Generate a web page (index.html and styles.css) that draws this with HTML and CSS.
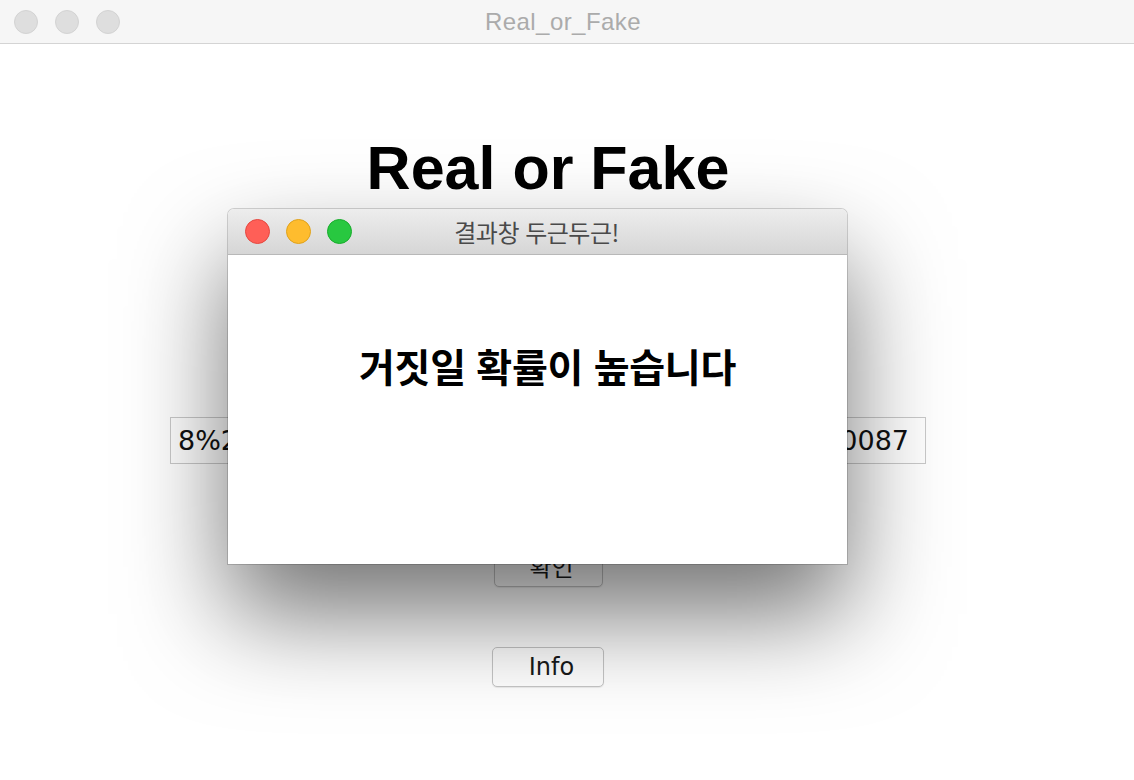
FILE: index.html
```html
<!DOCTYPE html>
<html lang="ko">
<head>
<meta charset="utf-8">
<title>Real_or_Fake</title>
<link rel="stylesheet" href="styles.css">
</head>
<body>
<div class="window">
  <div class="titlebar">
    <div class="lights">
      <span class="light gray"></span>
      <span class="light gray"></span>
      <span class="light gray"></span>
    </div>
    <div class="win-title">Real_or_Fake</div>
    <div></div>
  </div>
  <main class="content">
    <h1 class="headline">Real or Fake</h1>
    <div class="field"><span>8%2C%20</span><span>%2C0.0087</span></div>
    <button class="btn btn-check">확인</button>
    <button class="btn btn-info">Info</button>
  </main>

  <div class="dialog">
    <div class="dialog-bar">
      <div class="lights dlg-lights">
        <span class="light red"></span>
        <span class="light yellow"></span>
        <span class="light green"></span>
      </div>
      <div class="dlg-title">결과창 두근두근!</div>
      <div></div>
    </div>
    <div class="dialog-body">
      <p class="result">거짓일 확률이 높습니다</p>
    </div>
  </div>
</div>
</body>
</html>
```

FILE: styles.css
```css
html, body {
  margin: 0;
  padding: 0;
  background: #ffffff;
}
body {
  width: 1134px;
  height: 780px;
  overflow: hidden;
  font-family: "Liberation Sans", Arial, sans-serif;
}
.window {
  position: relative;
  width: 1134px;
  height: 780px;
  background: #ffffff;
}

/* main title bar */
.titlebar {
  height: 43px;
  background: #f6f6f6;
  border-bottom: 1px solid #d4d4d4;
  display: grid;
  grid-template-columns: 1fr auto 1fr;
  align-items: center;
  padding-right: 8px;
}
.lights {
  display: flex;
  align-items: center;
  gap: 17px;
  padding-left: 14px;
}
.light {
  display: block;
  width: 24px;
  height: 24px;
  border-radius: 50%;
  box-sizing: border-box;
}
.light.gray {
  background: #dedede;
  border: 1px solid #d3d3d3;
}
.win-title {
  font-size: 24px;
  color: #ababab;
  letter-spacing: 0.45px;
}

/* content */
.content {
  display: flex;
  flex-direction: column;
  align-items: center;
  padding-right: 38px;
}
.headline {
  margin: 94px 0 0;
  font-size: 61px;
  line-height: 61px;
  font-weight: 700;
  color: #000;
}
.field {
  margin-top: 218px;
  width: 756px;
  height: 47px;
  box-sizing: border-box;
  border: 1px solid #cacaca;
  display: flex;
  justify-content: space-between;
  align-items: center;
  padding: 0 16px 0 7px;
  font-family: "DejaVu Sans", sans-serif;
  font-size: 27px;
  color: #111;
  background: #fff;
}
.btn {
  height: 40px;
  box-sizing: border-box;
  border: 1px solid #c6c6c6;
  border-radius: 5px;
  background: #ffffff;
  box-shadow: 0 1px 1px rgba(0,0,0,0.08);
  font-family: "DejaVu Sans", "Noto Sans CJK KR", sans-serif;
  font-size: 24px;
  color: #1a1a1a;
  padding: 0 0 0 7px;
}
.btn-check {
  margin-top: 83px;
  width: 109px;
  padding-bottom: 5px;
}
.btn-info {
  margin-top: 60px;
  width: 112px;
}

/* dialog window */
.dialog {
  position: absolute;
  left: 228px;
  top: 209px;
  width: 619px;
  height: 355px;
  border-radius: 6px 6px 0 0;
  background: #fff;
  box-shadow: 0 50px 100px rgba(0,0,0,0.55), 0 0 0 1px rgba(0,0,0,0.16);
  overflow: hidden;
}
.dialog-bar {
  height: 46px;
  box-sizing: border-box;
  background: linear-gradient(#ededed, #d6d6d6);
  border-bottom: 1px solid #b8b8b8;
  display: grid;
  grid-template-columns: 1fr auto 1fr;
  align-items: center;
}
.dlg-lights {
  padding-left: 17px;
  gap: 16px;
}
.dlg-lights .light {
  width: 25px;
  height: 25px;
}
.light.red {
  background: #ff5f57;
  border: 1px solid #e5473f;
}
.light.yellow {
  background: #febc2e;
  border: 1px solid #e0a21a;
}
.light.green {
  background: #28c840;
  border: 1px solid #17ad2b;
}
.dlg-title {
  font-family: "Noto Sans CJK KR", sans-serif;
  font-size: 24px;
  letter-spacing: -0.5px;
  color: #4a4a4a;
  padding-right: 2px;
}
.dialog-body {
  display: flex;
  justify-content: center;
  padding: 87px 0 0 20px;
}
.result {
  margin: 0;
  font-family: "Noto Sans CJK KR", sans-serif;
  font-weight: 700;
  font-size: 39px;
  line-height: 46px;
  letter-spacing: -0.3px;
  color: #000;
}
```
